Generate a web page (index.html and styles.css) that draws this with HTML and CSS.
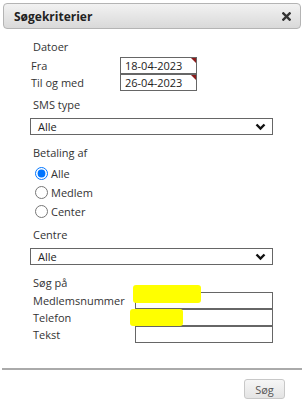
FILE: index.html
```html
<!DOCTYPE html>
<html lang="da">
<head>
    <meta charset="UTF-8">
    <meta name="viewport" content="width=device-width, initial-scale=1.0">
    <title>Søgekriterier</title>
    <link rel="stylesheet" href="styles.css">
</head>
<body>
    <div class="dialog">
        <div class="titlebar">
            <span class="title">Søgekriterier</span>
            <svg class="close" width="10" height="10" viewBox="0 0 10 10">
                <path d="M1.5 1.5 L8.5 8.5 M8.5 1.5 L1.5 8.5" stroke="#333" stroke-width="2.6" stroke-linecap="square"/>
            </svg>
        </div>

        <div class="content">
            <div class="heading first">Datoer</div>
            <div class="pairs dates">
                <label>Fra</label>
                <span class="date"><input type="text" value="18-04-2023"></span>
                <label>Til og med</label>
                <span class="date"><input type="text" value="26-04-2023"></span>
            </div>

            <div class="heading">SMS type</div>
            <div class="select">
                <span>Alle</span>
                <svg width="11" height="8" viewBox="0 0 11 8"><path d="M1.5 1.5 L5.5 5.5 L9.5 1.5" fill="none" stroke="#111" stroke-width="2.4"/></svg>
            </div>

            <div class="heading gap">Betaling af</div>
            <div class="radios">
                <label><input type="radio" name="bet" checked> Alle</label>
                <label><input type="radio" name="bet"> Medlem</label>
                <label><input type="radio" name="bet"> Center</label>
            </div>

            <div class="heading">Centre</div>
            <div class="select">
                <span>Alle</span>
                <svg width="11" height="8" viewBox="0 0 11 8"><path d="M1.5 1.5 L5.5 5.5 L9.5 1.5" fill="none" stroke="#111" stroke-width="2.4"/></svg>
            </div>

            <div class="heading gap">Søg på</div>
            <div class="pairs search">
                <label>Medlemsnummer</label>
                <span class="field"><input type="text"><span class="mark mark1"></span></span>
                <label>Telefon</label>
                <span class="field"><input type="text"><span class="mark mark2"></span></span>
                <label>Tekst</label>
                <span class="field"><input type="text"></span>
            </div>
        </div>

        <div class="footer">
            <button>Søg</button>
        </div>
    </div>
</body>
</html>
```

FILE: styles.css
```css
body {
    margin: 0;
    background: #fff;
    font-family: "Open Sans", "Noto Sans", sans-serif;
    font-size: 11px;
    color: #333;
}

.dialog {
    padding: 3px 3px 0 3px;
}

.titlebar {
    height: 24px;
    border: 1px solid #b4b4b4;
    border-radius: 4px;
    background: linear-gradient(#f2f2f2, #d9d9d9);
    display: flex;
    align-items: center;
    justify-content: space-between;
    padding: 0 9px 0 10px;
}

.title {
    font-weight: bold;
    font-size: 12px;
    color: #222;
}

.close {
    width: 9px;
    height: 9px;
}

.content {
    padding: 0 28px 0 27px;
}

.heading {
    height: 16px;
    line-height: 16px;
    padding-left: 3px;
    margin-top: 6px;
}

.heading.first {
    margin-top: 10px;
}

.heading.gap {
    margin-top: 10px;
}

.pairs {
    display: grid;
    align-items: center;
    margin-left: 1px;
}

.dates {
    grid-template-columns: 89px 77px;
    margin-top: 2px;
}

.search {
    grid-template-columns: 102px 138px;
    margin-left: 3px;
    margin-top: 1px;
}

.pairs label {
    line-height: 17px;
}

.date, .field {
    position: relative;
    display: block;
    height: 17px;
}

.pairs input {
    box-sizing: border-box;
    width: 100%;
    height: 17px;
    margin: 0;
    border: 1px solid #666;
    padding: 0 4px;
    font-family: inherit;
    font-size: 11px;
    color: #222;
    background: transparent;
}

.date::after {
    content: "";
    position: absolute;
    top: 1px;
    right: 1px;
    border-top: 5px solid #8b1c1c;
    border-left: 5px solid transparent;
}

.mark {
    position: absolute;
    z-index: 1;
    background: #ffff00;
    border-radius: 3px;
}

.mark1 {
    left: -2px;
    top: -7px;
    width: 68px;
    height: 18px;
}

.mark2 {
    left: -5px;
    top: 0;
    width: 53px;
    height: 17px;
}

.select {
    box-sizing: border-box;
    height: 17px;
    margin-top: 5px;
    border: 1px solid #666;
    display: flex;
    align-items: center;
    justify-content: space-between;
    padding: 0 6px 0 7px;
    color: #222;
}

.radios {
    margin-top: 3px;
    padding-left: 4px;
}

.radios label {
    display: flex;
    align-items: center;
    height: 19px;
}

.radios input {
    margin: 0 3px 0 1px;
    width: 13px;
    height: 13px;
}

.footer {
    margin-top: 25px;
    border-top: 2px solid #aaa;
    margin-left: -1px;
    margin-right: -1px;
    display: flex;
    justify-content: flex-end;
    padding: 9px 17px 0 0;
}

button {
    width: 41px;
    height: 20px;
    border: 1px solid #c8c8c8;
    border-radius: 3px;
    background: linear-gradient(#f6f6f6, #e4e4e4);
    color: #555;
    font-family: inherit;
    font-size: 11px;
    padding: 0;
}
```
